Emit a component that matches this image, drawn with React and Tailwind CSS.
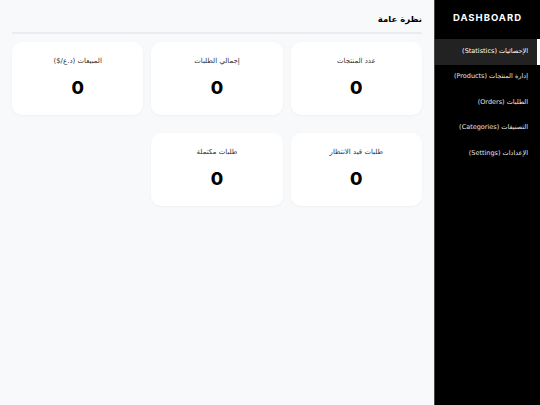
const stats = [
  { label: "عدد المنتجات", value: 0 },
  { label: "إجمالي الطلبات", value: 0 },
  { label: "المبيعات (د.ع/$)", value: 0 },
];

const orders = [
  { label: "طلبات قيد الانتظار", value: 0 },
  { label: "طلبات مكتملة", value: 0 },
];

const menu = [
  "الإحصائيات (Statistics)",
  "إدارة المنتجات (Products)",
  "الطلبات (Orders)",
  "التصنيفات (Categories)",
  "الإعدادات (Settings)",
];

const Card = ({ label, value }) => (
  <div className="bg-white rounded-[10px] shadow-[0_1px_3px_rgba(0,0,0,0.04)] h-[73px] pt-[14px] text-center">
    <p className="text-[7px] leading-[10px] text-[#333]">{label}</p>
    <p className="mt-[12px] text-[18px] leading-[20px] font-extrabold text-black font-['Inter',sans-serif]">
      {value}
    </p>
  </div>
);

export default function App() {
  return (
    <div
      dir="rtl"
      className="flex w-[540px] h-[405px] font-['DejaVu_Sans','Noto_Sans',sans-serif]"
    >
      <aside className="w-[106px] shrink-0 bg-black border-l border-[#4a4a4a]">
        <h1
          dir="ltr"
          className="pt-[12px] mb-[15px] text-center text-white text-[9.5px] leading-[12px] font-bold tracking-[1px] font-['Inter',sans-serif]"
        >
          DASHBOARD
        </h1>
        <nav className="flex flex-col">
          {menu.map((item, i) => (
            <div
              key={item}
              className={
                i === 0
                  ? "h-[25.5px] flex items-center pr-[9px] bg-[#222] border-r-[3px] border-white text-white text-[6.5px]"
                  : "h-[25.5px] flex items-center pr-[9px] border-r-[3px] border-transparent text-[#e5e5e5] text-[6.5px]"
              }
            >
              {item}
            </div>
          ))}
        </nav>
      </aside>

      <main className="flex-1 bg-[#f8f9fb] px-3">
        <h2 className="pt-[13px] pb-[7px] border-b-2 border-[#eaecef] text-[8.5px] leading-[12px] font-bold text-black">
          نظرة عامة
        </h2>
        <div className="mt-[8px] grid grid-cols-3 gap-x-2 gap-y-[18px]">
          {stats.map((s) => (
            <Card key={s.label} {...s} />
          ))}
          {orders.map((s) => (
            <Card key={s.label} {...s} />
          ))}
        </div>
      </main>
    </div>
  );
}
